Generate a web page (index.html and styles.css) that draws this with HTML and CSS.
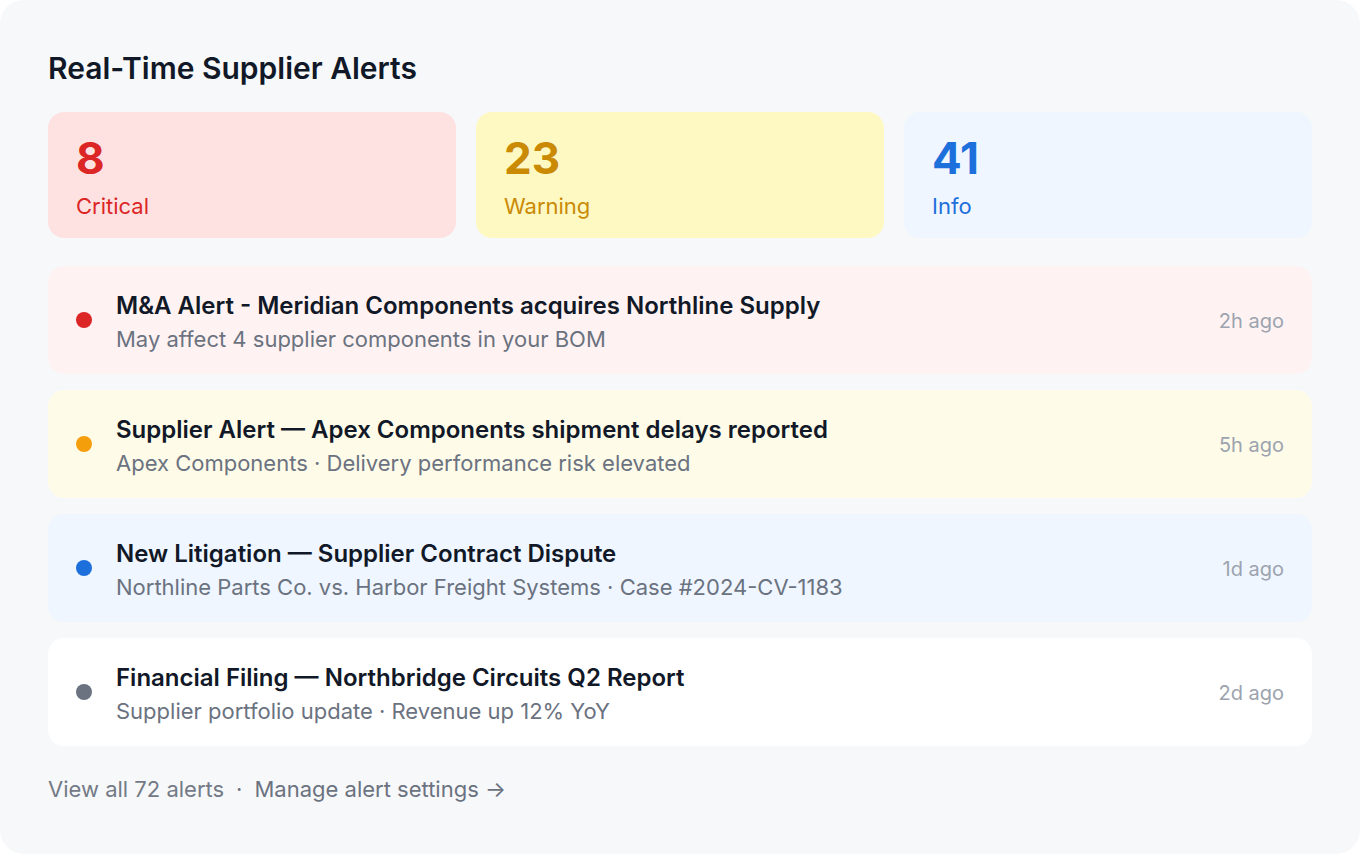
FILE: index.html
```html
<!DOCTYPE html>
<html lang="en">
<head>
<meta charset="utf-8">
<title>Real-Time Supplier Alerts</title>
<link rel="stylesheet" href="styles.css">
</head>
<body>
<section class="panel">
  <h1 class="title">Real-Time Supplier Alerts</h1>
  <div class="stats">
    <div class="stat stat-critical">
      <div class="stat-num">8</div>
      <div class="stat-label">Critical</div>
    </div>
    <div class="stat stat-warning">
      <div class="stat-num">23</div>
      <div class="stat-label">Warning</div>
    </div>
    <div class="stat stat-info">
      <div class="stat-num">41</div>
      <div class="stat-label">Info</div>
    </div>
  </div>
  <ul class="alerts">
    <li class="alert alert-critical">
      <span class="dot"></span>
      <div class="alert-body">
        <div class="alert-title">M&amp;A Alert - Meridian Components acquires Northline Supply</div>
        <div class="alert-sub">May affect 4 supplier components in your BOM</div>
      </div>
      <span class="alert-time">2h ago</span>
    </li>
    <li class="alert alert-warning">
      <span class="dot"></span>
      <div class="alert-body">
        <div class="alert-title">Supplier Alert — Apex Components shipment delays reported</div>
        <div class="alert-sub">Apex Components · Delivery performance risk elevated</div>
      </div>
      <span class="alert-time">5h ago</span>
    </li>
    <li class="alert alert-info">
      <span class="dot"></span>
      <div class="alert-body">
        <div class="alert-title">New Litigation — Supplier Contract Dispute</div>
        <div class="alert-sub">Northline Parts Co. vs. Harbor Freight Systems · Case #2024-CV-1183</div>
      </div>
      <span class="alert-time">1d ago</span>
    </li>
    <li class="alert alert-neutral">
      <span class="dot"></span>
      <div class="alert-body">
        <div class="alert-title">Financial Filing — Northbridge Circuits Q2 Report</div>
        <div class="alert-sub">Supplier portfolio update · Revenue up 12% YoY</div>
      </div>
      <span class="alert-time">2d ago</span>
    </li>
  </ul>
  <div class="footer">
    <a class="link link-muted">View all 72 alerts</a>
    <span class="sep">·</span>
    <a class="link">Manage alert settings →</a>
  </div>
</section>
</body>
</html>
```
FILE: styles.css
```css
* { box-sizing: border-box; }
html, body { margin: 0; padding: 0; background: #ffffff; }
body {
  font-family: Inter, "Noto Sans", "Liberation Sans", sans-serif;
  color: #0f172a;
}
.panel {
  width: 1360px;
  height: 854px;
  background: #f7f8fa;
  border-radius: 24px;
  padding: 48px 48px 0;
}
.title {
  margin: 0 0 24px;
  font-size: 30px;
  line-height: 40px;
  font-weight: 600;
  color: #111827;
}
.stats {
  display: grid;
  grid-template-columns: repeat(3, 1fr);
  gap: 20px;
  margin-bottom: 28px;
}
.stat {
  border-radius: 16px;
  padding: 22px 28px 18px;
  height: 126px;
}
.stat-num {
  font-size: 44px;
  line-height: 48px;
  font-weight: 700;
}
.stat-label {
  margin-top: 10px;
  font-size: 22px;
  line-height: 28px;
}
.stat-critical { background: #fee2e2; color: #dc2626; }
.stat-warning { background: #fef9c3; color: #ca8a04; }
.stat-info { background: #eff6ff; color: #1d6fdc; }

.alerts {
  list-style: none;
  margin: 0;
  padding: 0;
  display: flex;
  flex-direction: column;
  gap: 16px;
}
.alert {
  display: flex;
  align-items: center;
  gap: 24px;
  height: 108px;
  padding: 0 28px;
  border-radius: 16px;
}
.dot {
  width: 16px;
  height: 16px;
  border-radius: 50%;
  flex: none;
}
.alert-body { flex: 1; min-width: 0; padding-top: 4px; }
.alert-title {
  font-size: 24px;
  line-height: 32px;
  font-weight: 600;
  color: #111827;
}
.alert-sub {
  margin-top: 2px;
  font-size: 22px;
  line-height: 30px;
  color: #6b7280;
}
.alert-time {
  font-size: 20px;
  line-height: 28px;
  padding-top: 2px;
  color: #9ca3af;
  flex: none;
}
.alert-critical { background: #fef3f2; }
.alert-critical .dot { background: #dc2626; }
.alert-warning { background: #fefbe9; }
.alert-warning .dot { background: #f59e0b; }
.alert-info { background: #eff6ff; }
.alert-info .dot { background: #1d6fdc; }
.alert-neutral { background: #ffffff; }
.alert-neutral .dot { background: #6b7280; }

.footer {
  margin-top: 29px;
  font-size: 22px;
  line-height: 28px;
  color: #6b7280;
  display: flex;
  gap: 12px;
}
.link { color: #6b7280; text-decoration: none; }
.link-muted { color: #737a86; }
.sep { color: #6b7280; }
```
